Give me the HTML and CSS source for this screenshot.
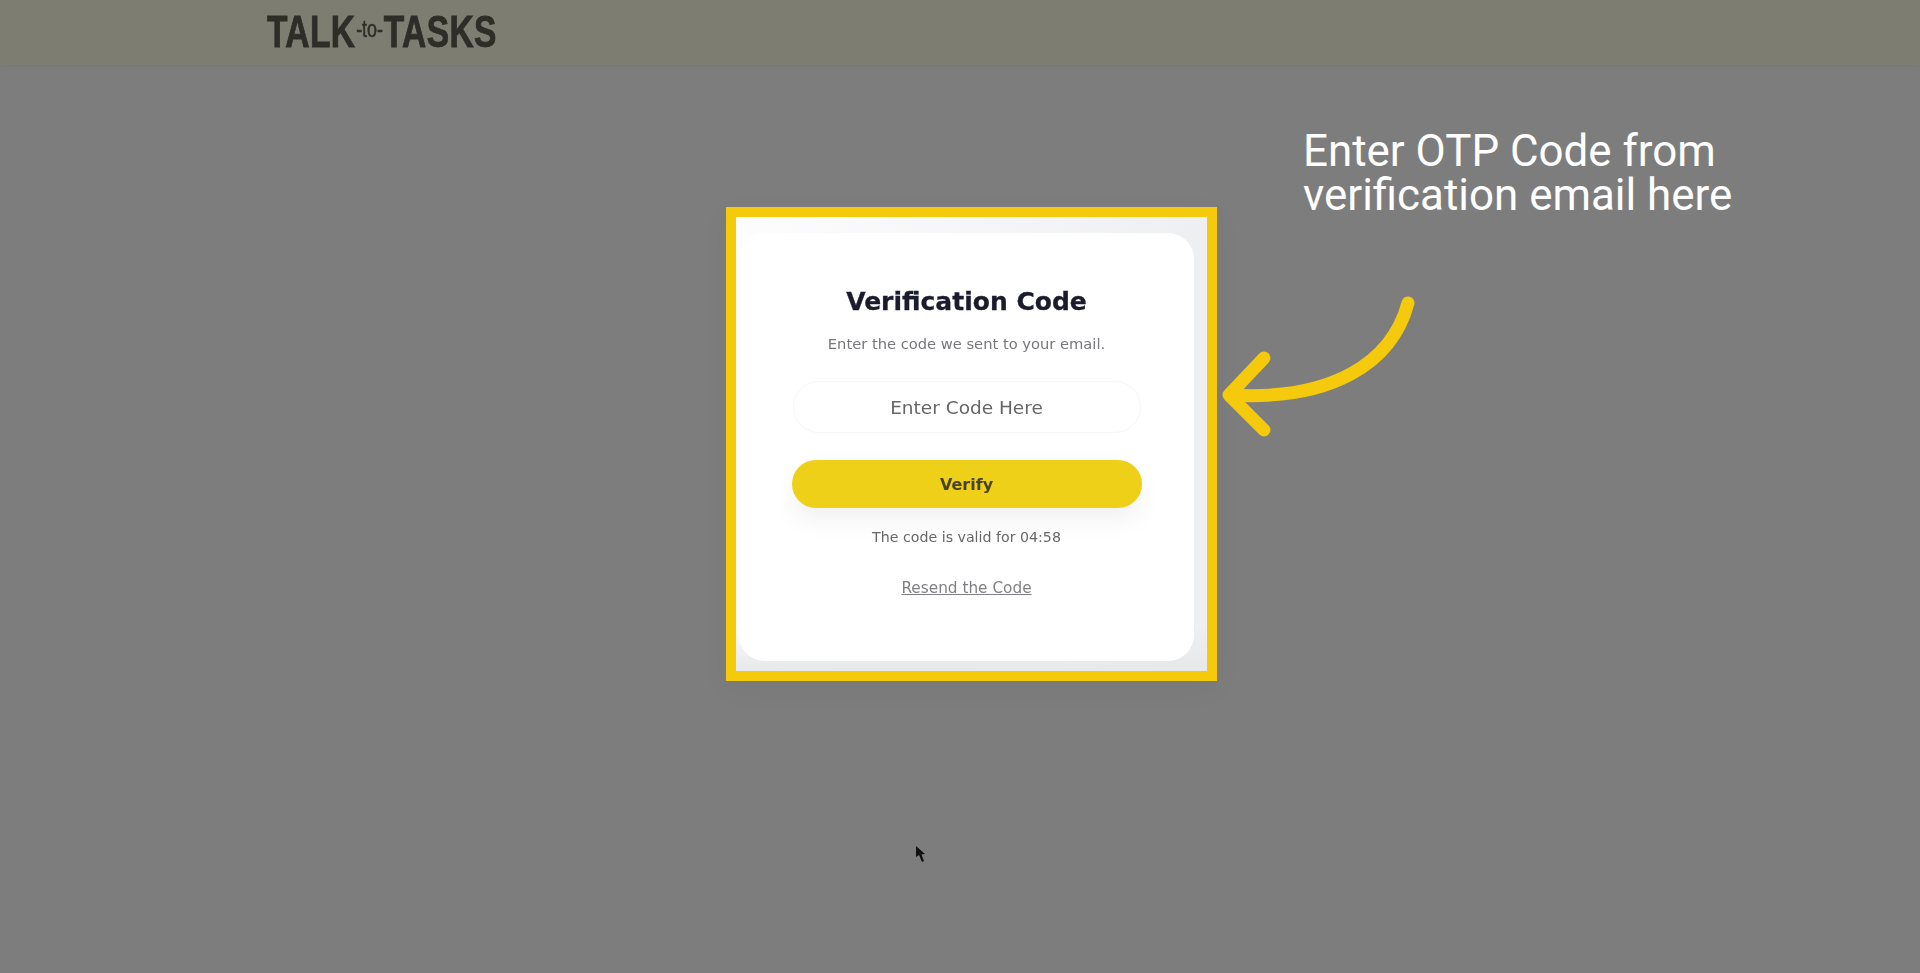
FILE: index.html
```html
<!DOCTYPE html>
<html lang="en">
<head>
<meta charset="utf-8">
<title>Verification Code</title>
<link rel="stylesheet" href="styles.css">
</head>
<body>
<header class="topbar">
  <div class="logo"><span class="logo-big">TALK</span><span class="logo-small">-to-</span><span class="logo-big">TASKS</span></div>
</header>
<main class="stage">
  <section class="frame">
    <div class="card">
      <h1 class="title">Verification Code</h1>
      <p class="lead">Enter the code we sent to your email.</p>
      <div class="code-input">Enter Code Here</div>
      <button class="verify" type="button">Verify</button>
      <p class="timer">The code is valid for 04:58</p>
      <a class="resend" href="#">Resend the Code</a>
    </div>
  </section>
</main>
<p class="note">Enter OTP Code from<br>verification email here</p>
<svg class="arrow" width="210" height="150" viewBox="0 0 210 150" fill="none">
  <path d="M186 10 C170 70 110 108 8 102" />
  <path d="M42 65 L7 102 L42 137" />
</svg>
<svg class="pointer" width="10" height="18" viewBox="0 0 10 18">
  <path d="M0 0 L0 11 L3 9 L6 16 L8 15 L5.500 8.500 L9 8 Z" />
</svg>
</body>
</html>
```
FILE: styles.css
```css
* { box-sizing: border-box; }
html, body { margin: 0; height: 100%; }
body {
  position: relative;
  height: 973px;
  overflow: hidden;
  background: #7d7d7d;
  font-family: "DejaVu Sans", sans-serif;
}
.topbar {
  height: 65px;
  background: #7d7d72;
  padding: 7px 0 0 267px;
  box-shadow: 0 1px 3px rgba(0, 0, 0, .06);
}
.logo {
  width: 229px;
  display: flex;
  align-items: center;
  color: #2e2d28;
  font-family: "Liberation Sans", sans-serif;
  font-weight: 700;
  filter: blur(.5px);
  white-space: nowrap;
  transform: scaleX(.745);
  transform-origin: left center;
  -webkit-text-stroke: .9px #2e2d28;
}
.logo-big { font-size: 45px; line-height: 44px; letter-spacing: .5px; }
.logo-small { font-size: 24px; line-height: 44px; font-weight: 400; padding: 0 1px 5px; -webkit-text-stroke: .5px #2e2d28; }
.stage { padding: 142px 0 0 726px; }
.frame {
  width: 491px;
  height: 474px;
  border: 10px solid #f5c90c;
  padding: 16px 13px 10px 3px;
  background:
    linear-gradient(180deg, rgba(231, 232, 234, 0) 90%, #e7e8ea 100%),
    linear-gradient(90deg, #fdfdfe 0%, #f6f6f8 50%, #eeeff1 100%);
  box-shadow: 0 8px 30px rgba(0, 0, 0, .04);
}
.card {
  height: 100%;
  background: #fff;
  border-radius: 26px;
  display: flex;
  flex-direction: column;
  align-items: center;
  padding-top: 52px;
  filter: blur(.5px);
}
.title {
  margin: 0;
  font-size: 25px;
  line-height: 34px;
  font-weight: 700;
  color: #1a1c2e;
  -webkit-text-stroke: .3px #1a1c2e;
}
.lead {
  margin: 15px 0 0;
  font-size: 14.7px;
  line-height: 20px;
  color: #77777c;
}
.code-input {
  margin-top: 27px;
  width: 348px;
  height: 52px;
  border: 1px solid #f6f6f6;
  border-radius: 26px;
  text-align: center;
  font-size: 18.500px;
  line-height: 51px;
  color: #666;
}
.verify {
  margin-top: 27px;
  width: 350px;
  height: 48px;
  border: 0;
  border-radius: 24px;
  background: #efd018;
  color: #4a4320;
  font-family: inherit;
  font-size: 16px;
  font-weight: 700;
  box-shadow: 0 14px 24px rgba(0, 0, 0, .05);
}
.timer {
  margin: 19px 0 0;
  font-size: 14.200px;
  line-height: 20px;
  color: #67676a;
}
.resend {
  margin-top: 31px;
  font-size: 15.300px;
  line-height: 20px;
  color: #808084;
}
.note {
  position: absolute;
  left: 1303px;
  top: 129px;
  margin: 0;
  font-family: Roboto, sans-serif;
  font-size: 43.900px;
  line-height: 44px;
  color: #fff;
}
.arrow {
  position: absolute;
  left: 1222px;
  top: 293px;
}
.arrow path {
  stroke: #f5c90c;
  stroke-width: 13;
  stroke-linecap: round;
  stroke-linejoin: round;
}
.pointer {
  position: absolute;
  left: 916px;
  top: 846px;
  filter: blur(.6px);
}
.pointer path { fill: #111; }
```
